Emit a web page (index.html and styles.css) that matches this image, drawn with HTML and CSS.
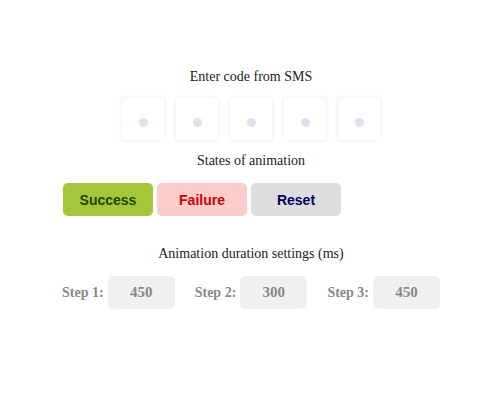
FILE: index.html
```html
<!DOCTYPE html>
<html>
<head>
<meta charset="utf-8">
<link rel="stylesheet" href="styles.css">
</head>
<body>
<div class="wrap">
  <div class="title t1">Enter code from SMS</div>
  <div class="codes">
    <div class="cell"><span class="dot"></span></div>
    <div class="cell"><span class="dot"></span></div>
    <div class="cell"><span class="dot"></span></div>
    <div class="cell"><span class="dot"></span></div>
    <div class="cell"><span class="dot"></span></div>
  </div>
  <div class="title t2">States of animation</div>
  <div class="buttons">
    <button class="btn success">Success</button>
    <button class="btn failure">Failure</button>
    <button class="btn reset">Reset</button>
  </div>
  <div class="title t3">Animation duration settings (ms)</div>
  <div class="steps">
    <label class="step"><span class="lbl">Step 1:</span><span class="val">450</span></label>
    <label class="step"><span class="lbl">Step 2:</span><span class="val">300</span></label>
    <label class="step"><span class="lbl">Step 3:</span><span class="val">450</span></label>
  </div>
</div>
</body>
</html>
```
FILE: styles.css
```css
html, body {
  margin: 0;
  padding: 0;
  background: #ffffff;
}
body {
  font-family: "Liberation Serif", "Times New Roman", serif;
  color: #222;
}
.wrap {
  width: 378px;
  margin-left: 62px;
  padding-top: 69px;
}
.title {
  text-align: center;
  font-size: 14px;
  line-height: 16px;
  color: #222;
}
.codes {
  display: flex;
  justify-content: center;
  gap: 12px;
  margin-top: 13px;
}
.cell {
  width: 42px;
  height: 42px;
  box-sizing: border-box;
  background: #fff;
  box-shadow: 0 0 4px rgba(160, 195, 240, 0.35);
  display: flex;
  justify-content: center;
  align-items: flex-start;
  padding-top: 20px;
}
.dot {
  width: 9px;
  height: 9px;
  border-radius: 50%;
  background: #dce3ec;
}
.t2 { margin-top: 13px; }
.buttons {
  display: flex;
  gap: 4px;
  margin-top: 14px;
  padding-left: 1px;
}
.btn {
  width: 90px;
  height: 33px;
  border: none;
  border-radius: 5px;
  font-family: "Liberation Sans", Arial, sans-serif;
  font-weight: bold;
  font-size: 14px;
  padding: 0;
  margin: 0;
}
.success { background: #a5c63a; color: #1a4a00; }
.failure { background: #ffcccc; color: #d00000; }
.reset { background: #dddddd; color: #000066; }
.t3 { margin-top: 30px; }
.steps {
  display: flex;
  justify-content: space-between;
  margin-top: 14px;
}
.step {
  display: flex;
  align-items: center;
  gap: 4px;
}
.lbl {
  font-weight: bold;
  font-size: 14px;
  color: #888;
}
.val {
  width: 67px;
  height: 33px;
  border-radius: 5px;
  background: #f0f0f0;
  color: #888;
  font-weight: bold;
  font-size: 15px;
  display: flex;
  align-items: center;
  justify-content: center;
}
```
